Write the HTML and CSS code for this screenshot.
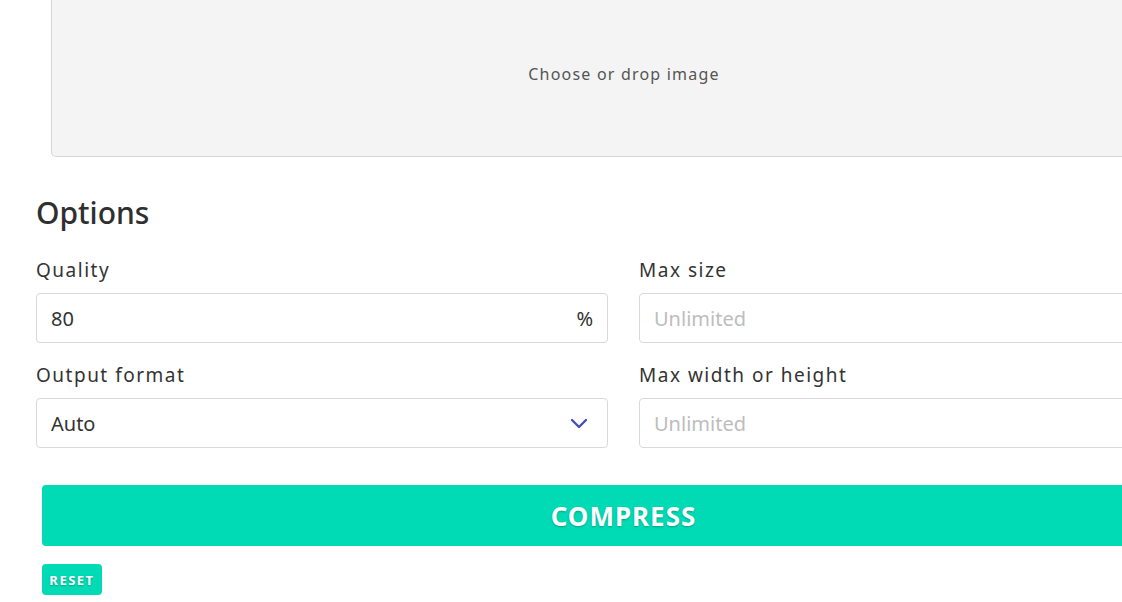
FILE: index.html
```html
<!DOCTYPE html>
<html lang="en">
<head>
<meta charset="utf-8">
<title>Compress image</title>
<link rel="stylesheet" href="styles.css">
</head>
<body>
<div class="page">
  <div class="dropzone"><span class="drop-text">Choose or drop image</span></div>
  <h2 class="heading">Options</h2>
  <div class="grid">
    <div class="field">
      <label class="label">Quality</label>
      <div class="input"><span class="value">80</span><span class="suffix">%</span></div>
    </div>
    <div class="field">
      <label class="label">Max size</label>
      <div class="input"><span class="placeholder">Unlimited</span></div>
    </div>
    <div class="field">
      <label class="label">Output format</label>
      <div class="input"><span class="value">Auto</span>
        <svg class="chevron" width="18" height="11" viewBox="0 0 18 11"><path d="M2 2 L9 9 L16 2" fill="none" stroke="#3f51b5" stroke-width="2.4" stroke-linecap="round" stroke-linejoin="round"/></svg>
      </div>
    </div>
    <div class="field">
      <label class="label">Max width or height</label>
      <div class="input"><span class="placeholder">Unlimited</span></div>
    </div>
  </div>
  <button class="compress">COMPRESS</button>
  <button class="reset">RESET</button>
</div>
</body>
</html>
```
FILE: styles.css
```css
html, body {
  margin: 0;
  padding: 0;
  overflow: hidden;
  background: #fff;
}
body {
  font-family: "Noto Sans", "Open Sans", sans-serif;
  color: #333;
}
.page {
  width: 1175px;
  margin-left: 36px;
  display: flex;
  flex-direction: column;
  align-items: flex-start;
}
.dropzone {
  box-sizing: border-box;
  align-self: stretch;
  margin: 0 14px 0 15px;
  height: 157px;
  background: #f4f4f4;
  border: 1px solid #d6d6d6;
  border-top: none;
  border-radius: 0 0 5px 5px;
  display: flex;
  justify-content: center;
  padding-top: 63px;
}
.drop-text {
  font-size: 16px;
  letter-spacing: 1.2px;
  color: #555;
  line-height: 22px;
}
.heading {
  margin: 36px 0 0 0;
  font-size: 30px;
  font-weight: 500;
  line-height: 40px;
  color: #2f2f2f;
}
.grid {
  align-self: stretch;
  display: grid;
  grid-template-columns: 1fr 1fr;
  column-gap: 31px;
  row-gap: 19px;
  margin-top: 24px;
}
.field {
  display: flex;
  flex-direction: column;
}
.label {
  font-size: 19px;
  letter-spacing: 1.5px;
  line-height: 26px;
  color: #333;
  margin-bottom: 10px;
}
.input {
  box-sizing: border-box;
  height: 50px;
  border: 1px solid #d9d9d9;
  border-radius: 4px;
  display: flex;
  align-items: center;
  padding: 0 14px;
  font-size: 20px;
}
.value {
  flex: 1;
  color: #333;
}
.suffix {
  color: #333;
}
.placeholder {
  color: #bdbdbd;
}
.chevron {
  margin-right: 5px;
}
.compress {
  align-self: stretch;
  margin: 37px 6px 0 6px;
  height: 61px;
  border: none;
  border-radius: 4px;
  background: #00dab5;
  color: #fff;
  font-family: "Noto Sans", "Open Sans", sans-serif;
  font-weight: 700;
  font-size: 26px;
  letter-spacing: 1px;
  text-shadow: 0 1px 2px rgba(0,0,0,0.25);
  cursor: pointer;
}
.reset {
  margin: 18px 0 0 6px;
  height: 31px;
  width: 60px;
  padding: 0;
  border: none;
  border-radius: 4px;
  background: #00dab5;
  color: #fff;
  font-family: "Noto Sans", "Open Sans", sans-serif;
  font-weight: 700;
  font-size: 13px;
  letter-spacing: 1.5px;
  text-shadow: 0 1px 2px rgba(0,0,0,0.25);
  cursor: pointer;
}
```
